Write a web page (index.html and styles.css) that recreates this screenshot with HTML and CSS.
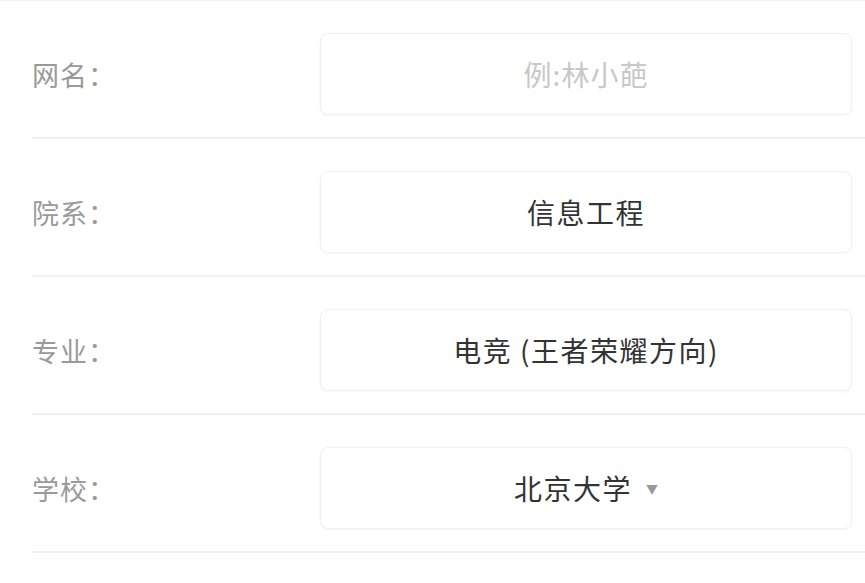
FILE: index.html
```html
<!DOCTYPE html>
<html lang="zh">
<head>
  <meta charset="UTF-8">
  <title>个人资料</title>
  <link rel="stylesheet" href="styles.css">
</head>
<body>
<div class="form-list">
  <div class="form-row">
    <label class="row-label">网名：</label>
    <div class="row-box">
      <input class="row-input" type="text" placeholder="例:林小葩">
    </div>
  </div>
  <div class="form-row">
    <label class="row-label">院系：</label>
    <div class="row-box"><span class="row-value">信息工程</span></div>
  </div>
  <div class="form-row">
    <label class="row-label">专业：</label>
    <div class="row-box"><span class="row-value">电竞 (王者荣耀方向)</span></div>
  </div>
  <div class="form-row">
    <label class="row-label">学校：</label>
    <div class="row-box select-box">
      <span class="row-value">北京大学</span>
      <span class="arrow">▼</span>
    </div>
  </div>
</div>
</body>
</html>
```
FILE: styles.css
```css
body {
  margin: 0;
  background-color: #fff;
  font-family: "Noto Sans CJK SC", "Noto Sans", sans-serif;
}
.form-list {
  border-top: 1px solid #f2f2f2;
}
.form-row {
  display: flex;
  align-items: center;
  margin-left: 32px;
  padding: 32px 13px 22px 0;
  border-bottom: 2px solid #f0f0f0;
}
.row-label {
  width: 288px;
  font-size: 27px;
  color: #9a9a9a;
  letter-spacing: 1px;
}
.row-box {
  flex: 1;
  height: 80px;
  display: flex;
  align-items: center;
  justify-content: center;
  border: 1px solid #f0f0f0;
  border-radius: 8px;
  box-shadow: 0 1px 3px rgba(0,0,0,0.04);
  background-color: #fff;
}
.row-input {
  width: 100%;
  border: none;
  outline: none;
  background: transparent;
  text-align: center;
  font-family: inherit;
  font-size: 28px;
  letter-spacing: 1px;
  color: #333;
}
.row-input::placeholder {
  color: #c8c8c8;
}
.row-value {
  font-size: 28px;
  letter-spacing: 1.5px;
  color: #333;
}
.arrow {
  margin-left: 14px;
  font-size: 12px;
  color: #999;
}
```
